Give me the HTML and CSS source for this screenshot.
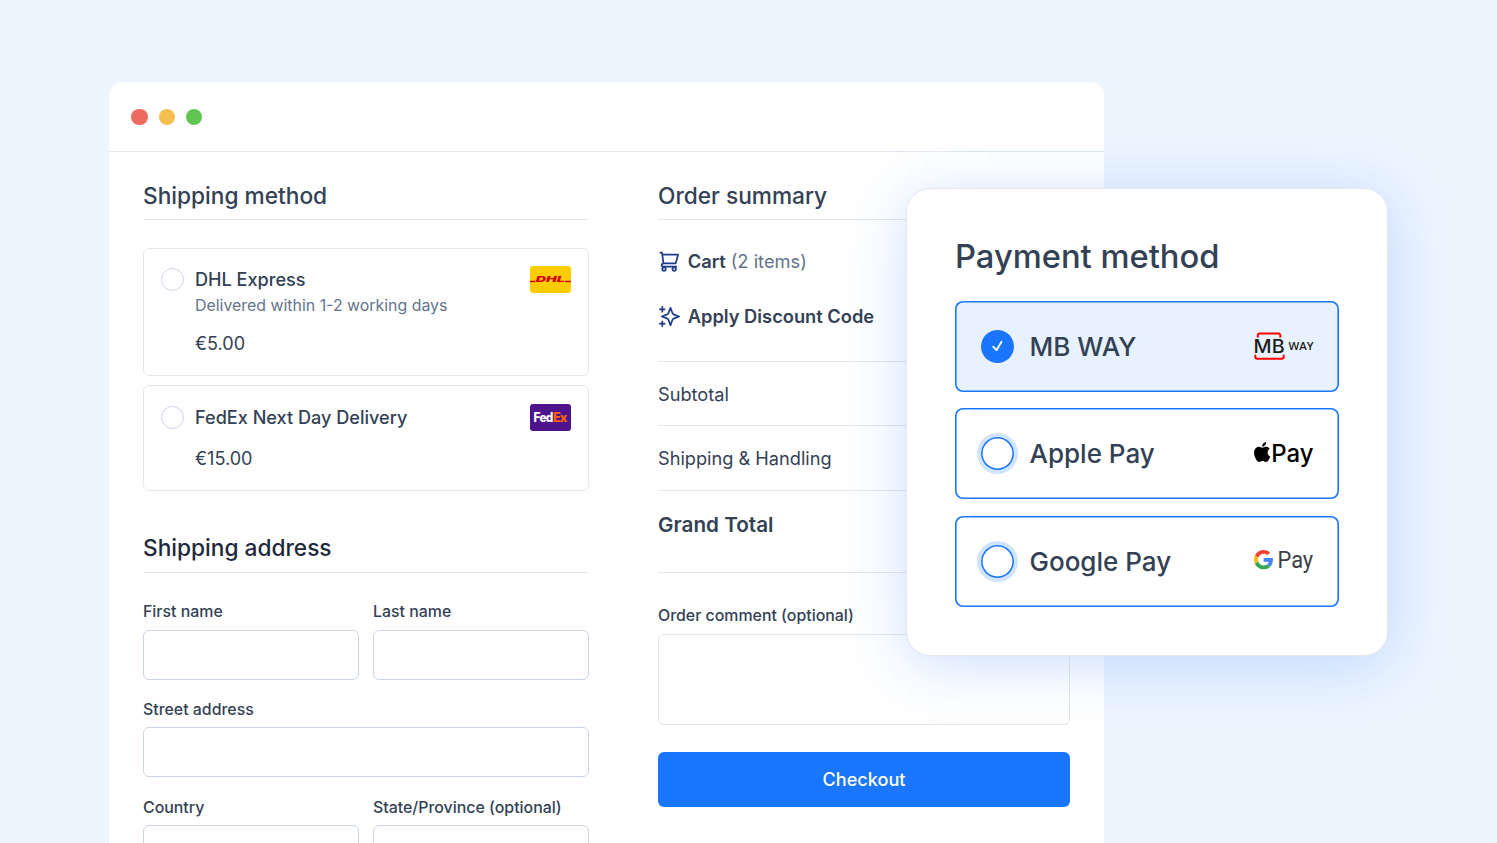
FILE: index.html
```html
<!doctype html>
<html lang="en">
    <head>
        <meta charset="utf-8">
        <title>Checkout</title>
        <link rel="stylesheet" href="styles.css">
    </head>
    <body>
        <main class="window">
            <header class="titlebar">
                <span class="dot red"></span>
                <span class="dot yellow"></span>
                <span class="dot green"></span>
            </header>
            <div class="columns">
                <form class="details">
                    <h2>Shipping method</h2>
                    <div class="shipping">
                        <label class="method">
                            <span class="radio"></span>
                            <span class="info">
                                <span class="name">DHL Express</span>
                                <span class="note">Delivered within 1-2 working days</span>
                                <span class="price">€5.00</span>
                            </span>
                            <svg class="carrier" viewBox="0 0 41 27">
                                <rect width="41" height="27" rx="3" fill="#ffcc00"/>
                                <path d="M0 15.500h5.400M35 15.500H41" stroke="#d40511" stroke-width="1.400"/>
                                <text class="dhl" x="5.800" y="16.400" textLength="29" lengthAdjust="spacingAndGlyphs">DHL</text>
                            </svg>
                        </label>
                        <label class="method">
                            <span class="radio"></span>
                            <span class="info">
                                <span class="name">FedEx Next Day Delivery</span>
                                <span class="price">€15.00</span>
                            </span>
                            <svg class="carrier" viewBox="0 0 41 27">
                                <rect width="41" height="27" rx="3" fill="#4d148c"/>
                                <text class="fedex" x="3.600" y="18" textLength="19" lengthAdjust="spacingAndGlyphs">Fed</text>
                                <text class="fedex orange" x="22.900" y="18" textLength="13.700" lengthAdjust="spacingAndGlyphs">Ex</text>
                            </svg>
                        </label>
                    </div>
                    <h2 class="address-title">Shipping address</h2>
                    <div class="address">
                        <div class="field">
                            <label for="first">First name</label>
                            <input id="first" type="text">
                        </div>
                        <div class="field">
                            <label for="last">Last name</label>
                            <input id="last" type="text">
                        </div>
                        <div class="field wide">
                            <label for="street">Street address</label>
                            <input id="street" type="text">
                        </div>
                        <div class="field">
                            <label for="country">Country</label>
                            <input id="country" type="text">
                        </div>
                        <div class="field">
                            <label for="state">State/Province (optional)</label>
                            <input id="state" type="text">
                        </div>
                    </div>
                </form>

                <section class="summary">
                    <h2>Order summary</h2>
                    <div class="links">
                        <div class="link">
                            <svg class="icon" viewBox="0 0 24 24">
                                <path d="M2.500 2.800h1.700l1.500 11.200M4.500 4.800H21l-2.600 9.200H5.700C4.400 14.400 3.700 15 3.700 15.900 3.700 16.800 4.400 17.300 5.500 17.300H19"/>
                                <circle cx="6.300" cy="19.900" r="1.800"/>
                                <circle cx="16.900" cy="19.900" r="1.800"/>
                            </svg>
                            <strong>Cart</strong>
                            <span class="count">(2 items)</span>
                        </div>
                        <div class="link">
                            <svg class="icon" viewBox="0 0 24 24">
                                <path d="M4.500 22v-5m0-10V2M2 4.500h5m-5 15h5M13 3l-1.734 4.509c-.282.733-.423 1.100-.643 1.408a3 3 0 0 1-.706.707c-.308.219-.675.360-1.408.642L4 12l4.509 1.734c.733.282 1.100.423 1.408.643.273.194.512.433.706.706.220.308.360.675.643 1.408L13 21l1.734-4.509c.282-.733.423-1.100.643-1.408a3 3 0 0 1 .706-.706c.308-.220.675-.360 1.408-.643L22 12l-4.509-1.734c-.733-.282-1.100-.423-1.408-.642a3 3 0 0 1-.706-.707c-.220-.308-.360-.675-.643-1.408L13 3Z"/>
                            </svg>
                            <strong>Apply Discount Code</strong>
                        </div>
                    </div>
                    <div class="row">Subtotal</div>
                    <div class="row">Shipping &amp; Handling</div>
                    <div class="row total">Grand Total</div>
                    <div class="field comment">
                        <label for="comment">Order comment (optional)</label>
                        <textarea id="comment"></textarea>
                    </div>
                    <button>Checkout</button>
                </section>
            </div>
        </main>

        <!-- Payment dialog floats over the checkout window -->
        <aside class="payment">
            <h1>Payment method</h1>
            <div class="option selected">
                <span class="radio">
                    <svg viewBox="0 0 33 33"><path d="M12.200 16.700l3.300 3.500 5-8.500"/></svg>
                </span>
                <span class="name">MB WAY</span>
                <svg class="brand" viewBox="0 0 60 30">
                    <path class="bracket" d="M3.800 5.700V4.500Q3.800 2.500 5.800 2.500H24.300Q26.300 2.500 26.300 4.500V5.700M1.300 24.500V25.800Q1.300 27.800 3.300 27.800H27.700Q29.700 27.800 29.700 25.800V24.500"/>
                    <text class="mb" x="-.400" y="21.700" textLength="31" lengthAdjust="spacingAndGlyphs">MB</text>
                    <text class="way" x="34.600" y="19.300" textLength="25" lengthAdjust="spacingAndGlyphs">WAY</text>
                </svg>
            </div>
            <div class="option">
                <span class="radio"></span>
                <span class="name">Apple Pay</span>
                <svg class="brand" viewBox="0 0 60 30">
                    <path transform="translate(-1.800 3) scale(.83)" d="M12.152 6.896c-.948 0-2.415-1.078-3.960-1.040-2.040.027-3.910 1.183-4.961 3.014-2.117 3.675-.546 9.103 1.519 12.090 1.013 1.454 2.208 3.090 3.792 3.039 1.520-.065 2.090-.987 3.935-.987 1.831 0 2.350.987 3.960.948 1.637-.026 2.676-1.480 3.676-2.948 1.156-1.688 1.636-3.325 1.662-3.415-.039-.013-3.182-1.221-3.220-4.857-.026-3.040 2.480-4.494 2.597-4.559-1.429-2.090-3.623-2.324-4.390-2.376-2-.156-3.675 1.090-4.610 1.090zM15.530 3.830c.843-1.012 1.400-2.427 1.245-3.830-1.207.052-2.662.805-3.532 1.818-.780.896-1.454 2.338-1.273 3.714 1.338.104 2.715-.688 3.559-1.701"/>
                    <text class="apple" x="17.300" y="23" textLength="42.200" lengthAdjust="spacingAndGlyphs">Pay</text>
                </svg>
            </div>
            <div class="option">
                <span class="radio"></span>
                <span class="name">Google Pay</span>
                <svg class="brand" viewBox="0 0 60 30">
                    <g transform="translate(-.100 3.900) scale(.405)">
                        <path fill="#ea4335" d="M24 9.500c3.540 0 6.710 1.220 9.210 3.600l6.850-6.850C35.900 2.380 30.470 0 24 0 14.620 0 6.510 5.380 2.560 13.220l7.980 6.190C12.430 13.720 17.740 9.500 24 9.500z"/>
                        <path fill="#4285f4" d="M46.980 24.550c0-1.570-.150-3.090-.380-4.550H24v9.020h12.940c-.580 2.960-2.260 5.480-4.780 7.180l7.730 6c4.510-4.180 7.090-10.360 7.090-17.650z"/>
                        <path fill="#fbbc05" d="M10.530 28.590c-.480-1.450-.760-2.990-.760-4.590s.270-3.140.760-4.590l-7.980-6.190C.920 16.460 0 20.120 0 24c0 3.880.920 7.540 2.560 10.780l7.970-6.190z"/>
                        <path fill="#34a853" d="M24 48c6.480 0 11.930-2.130 15.890-5.810l-7.730-6c-2.150 1.450-4.920 2.300-8.160 2.300-6.260 0-11.570-4.220-13.470-9.910l-7.980 6.190C6.510 42.620 14.620 48 24 48z"/>
                    </g>
                    <text class="google" x="23.500" y="22.200" textLength="35.700" lengthAdjust="spacingAndGlyphs">Pay</text>
                </svg>
            </div>
        </aside>
    </body>
</html>
```
FILE: styles.css
```css
* {
    box-sizing: border-box;
}

body {
    margin: 0;
    height: 843px;
    overflow: hidden;
    padding: 82px 0 0 109px;
    background-color: #edf5ff;
    color: #334155;
    font-family: "Inter", "Helvetica Neue", Arial, sans-serif;
    font-size: 18.3px;
}

h1, h2 {
    margin: 0;
    font-weight: 500;
}

h2 {
    height: 49px;
    font-size: 22.7px;
    line-height: 28px;
    border-bottom: 1px solid #e2e8f0;
}

.window {
    width: 995px;
    height: 800px;
    background-color: #fff;
    border-radius: 14px 14px 0 0;
}

.titlebar {
    display: flex;
    align-items: center;
    gap: 10.8px;
    height: 70px;
    padding: 1px 0 0 22.4px;
    border-bottom: 1px solid #e2e8f0;
}

.dot {
    width: 16.4px;
    height: 16.4px;
    border-radius: 50%;
}

.red {
    background-color: #ec6a5e;
}

.yellow {
    background-color: #f4bf4f;
}

.green {
    background-color: #61c554;
}

.columns {
    display: grid;
    grid-template-columns: 446px 412px;
    column-gap: 69px;
    padding: 19px 34px 0;
}

.columns h2 {
    padding-top: 10.5px;
}

/* Shipping */

.shipping {
    display: flex;
    flex-direction: column;
    gap: 9px;
    padding-top: 28px;
}

.method {
    display: flex;
    align-items: flex-start;
    height: 128px;
    padding: 17px 17px 0;
    border: 1px solid #e2e8f0;
    border-radius: 6px;
}

.method:nth-child(2) {
    height: 106px;
    padding-top: 17.5px;
}

.method .radio {
    width: 23px;
    height: 23px;
    margin-top: 2px;
    border: 1px solid #cbd5e1;
    border-radius: 50%;
}

.info {
    display: flex;
    flex: 1;
    flex-direction: column;
    padding-left: 11px;
    line-height: 26px;
}

.info .name {
    font-size: 18.1px;
    font-weight: 500;
}

.note {
    padding-top: 1px;
    color: #64748b;
    font-size: 15.9px;
}

.price {
    margin-top: 11px;
    font-size: 18.1px;
}

.method:nth-child(2) .price {
    margin-top: 15.5px;
}

.carrier {
    width: 41px;
    height: 27px;
}

.dhl {
    fill: #d40511;
    font: italic 900 8.2px "Inter", sans-serif;
}

.fedex {
    fill: #fff;
    font: 800 12.6px "Inter", sans-serif;
    letter-spacing: -.8px;
}

.orange {
    fill: #ff6200;
}

.columns .address-title {
    margin-top: 33px;
    padding-top: 10px;
    color: #1e293b;
}

.address {
    display: grid;
    grid-template-columns: 1fr 1fr;
    gap: 18px 14px;
    padding-top: 27px;
}

.wide {
    grid-column: span 2;
}

.field {
    display: flex;
    flex-direction: column;
}

.field label {
    height: 30px;
    font-size: 15.9px;
    font-weight: 500;
    line-height: 23px;
}

.address .field {
    height: 79.75px;
}

.address .field label {
    height: 29.6px;
}

input, textarea {
    width: 100%;
    height: 50px;
    border: 1px solid #cbd5e1;
    border-radius: 6px;
    background-color: #fff;
    resize: none;
}

/* Summary */

.links {
    display: flex;
    flex-direction: column;
    gap: 27px;
    height: 142px;
    padding-top: 27px;
    border-bottom: 1px solid #e2e8f0;
}

.link {
    display: flex;
    align-items: center;
    height: 28px;
}

.link strong {
    font-weight: 600;
}

.icon {
    width: 23px;
    height: 23px;
    margin-right: 6.7px;
    fill: none;
    stroke: #1e3a8a;
    stroke-width: 1.8;
    stroke-linecap: round;
    stroke-linejoin: round;
}

.count {
    margin-left: 5px;
    color: #64748b;
}

.row {
    display: flex;
    align-items: center;
    height: 64.3px;
    border-bottom: 1px solid #e2e8f0;
}

.row:not(.total) {
    font-size: 18.2px;
}

.total {
    height: 82px;
    padding-bottom: 13px;
    font-size: 20.7px;
    font-weight: 600;
}

.comment {
    padding-top: 31.6px;
}

.comment textarea {
    height: 91px;
    border-color: #e2e8f0;
}

button {
    width: 100%;
    height: 55px;
    margin-top: 27px;
    padding: 0 0 1px;
    border: none;
    border-radius: 6px;
    background-color: #1a76ff;
    color: #fff;
    font-family: inherit;
    font-size: 18.1px;
    font-weight: 500;
}

/* Payment dialog */

.payment {
    position: absolute;
    top: 187.5px;
    left: 906px;
    display: flex;
    flex-direction: column;
    gap: 16.5px;
    width: 482px;
    height: 468px;
    padding: 46px 48px 0;
    border: 1px solid #e2e8f0;
    border-radius: 24px;
    background-color: #fff;
    box-shadow: 0 9px 60px rgba(26, 110, 250, .22);
}

.payment h1 {
    height: 49.6px;
    font-size: 32.7px;
    line-height: 43px;
}

.option {
    display: flex;
    align-items: center;
    height: 91px;
    padding: 0 25.5px 0 26px;
    border-radius: 8px;
    box-shadow: inset 0 0 0 1.6px #1a76ff;
}

.option .radio {
    width: 33px;
    height: 33px;
    border-radius: 50%;
    box-shadow: inset 0 0 0 1.6px #1a76ff, 0 0 0 4px #d1e4ff;
}

.option .name {
    flex: 1;
    padding-left: 15.5px;
    font-size: 26px;
    font-weight: 500;
}

.selected {
    background-color: #e8f1ff;
}

.option.selected .radio {
    background-color: #1a76ff;
    box-shadow: none;
}

.radio svg {
    display: block;
    fill: none;
    stroke: #fff;
    stroke-width: 1.8;
    stroke-linecap: round;
    stroke-linejoin: round;
}

.brand {
    width: 60px;
    height: 30px;
    overflow: visible;
}

.bracket {
    fill: none;
    stroke: #f00;
    stroke-width: 2;
    stroke-linecap: round;
}

.mb {
    fill: #1d1d1b;
    font: 500 18px "Inter", sans-serif;
}

.way {
    fill: #1d1d1b;
    font: 600 11.5px "Open Sans", sans-serif;
}

.apple {
    font: 500 24.5px "Inter", sans-serif;
}

.google {
    fill: #3c4043;
    font: 23px "Roboto", sans-serif;
}
```
